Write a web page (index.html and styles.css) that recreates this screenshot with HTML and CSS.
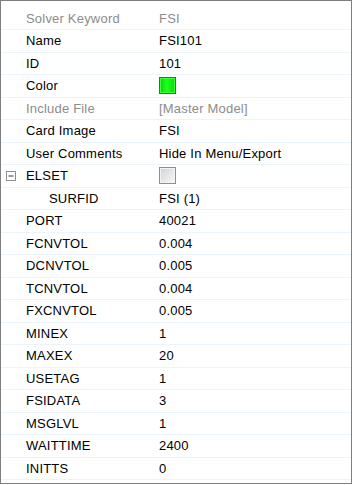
FILE: index.html
```html
<!DOCTYPE html>
<html>
<head>
<meta charset="utf-8">
<link rel="stylesheet" href="styles.css">
</head>
<body>
<div class="panel">
  <div class="row dis"><span class="lbl">Solver Keyword</span><span class="val">FSI</span></div>
  <div class="row"><span class="lbl">Name</span><span class="val">FSI101</span></div>
  <div class="row"><span class="lbl">ID</span><span class="val">101</span></div>
  <div class="row"><span class="lbl">Color</span><span class="val"><span class="swatch"></span></span></div>
  <div class="row dis"><span class="lbl">Include File</span><span class="val">[Master Model]</span></div>
  <div class="row"><span class="lbl">Card Image</span><span class="val">FSI</span></div>
  <div class="row"><span class="lbl">User Comments</span><span class="val">Hide In Menu/Export</span></div>
  <div class="row"><span class="lbl"><span class="tog"><svg width="10" height="10" viewBox="0 0 10 10"><rect x="0.5" y="0.5" width="9" height="9" fill="#fff" stroke="#8e8f8f"/><path d="M2.5 5h5" stroke="#3a3a3a"/></svg></span>ELSET</span><span class="val"><span class="check"></span></span></div>
  <div class="row"><span class="lbl sub">SURFID</span><span class="val">FSI (1)</span></div>
  <div class="row"><span class="lbl">PORT</span><span class="val">40021</span></div>
  <div class="row"><span class="lbl">FCNVTOL</span><span class="val">0.004</span></div>
  <div class="row"><span class="lbl">DCNVTOL</span><span class="val">0.005</span></div>
  <div class="row"><span class="lbl">TCNVTOL</span><span class="val">0.004</span></div>
  <div class="row"><span class="lbl">FXCNVTOL</span><span class="val">0.005</span></div>
  <div class="row"><span class="lbl">MINEX</span><span class="val">1</span></div>
  <div class="row"><span class="lbl">MAXEX</span><span class="val">20</span></div>
  <div class="row"><span class="lbl">USETAG</span><span class="val">1</span></div>
  <div class="row"><span class="lbl">FSIDATA</span><span class="val">3</span></div>
  <div class="row"><span class="lbl">MSGLVL</span><span class="val">1</span></div>
  <div class="row"><span class="lbl">WAITTIME</span><span class="val">2400</span></div>
  <div class="row"><span class="lbl">INITTS</span><span class="val">0</span></div>
</div>
</body>
</html>
```
FILE: styles.css
```css
html, body {
  margin: 0;
  padding: 0;
  background: #fff;
}
body {
  font-family: "Liberation Sans", Arial, sans-serif;
  font-size: 13px;
  letter-spacing: 0.2px;
  color: #000;
}
.panel {
  box-sizing: border-box;
  width: 352px;
  height: 484px;
  border: 1px solid #7f7f7f;
  padding-top: 6.5px;
  background: #fff;
  overflow: hidden;
}
.row {
  box-sizing: border-box;
  height: 22.5px;
  border-bottom: 1px solid #eaf4fa;
  display: flex;
  align-items: center;
}
.lbl {
  width: 133px;
  padding-left: 25px;
  display: flex;
  align-items: center;
  position: relative;
  white-space: nowrap;
}
.lbl.sub {
  padding-left: 48px;
  width: 110px;
}
.val {
  display: flex;
  align-items: center;
  white-space: nowrap;
}
.dis .lbl, .dis .val {
  color: #8c8c8c;
}
.tog {
  position: absolute;
  left: 5px;
  top: 50%;
  margin-top: -5px;
  width: 10px;
  height: 10px;
  display: block;
}
.tog svg {
  display: block;
}
.swatch {
  display: block;
  box-sizing: border-box;
  width: 17px;
  height: 17px;
  border: 1px solid #5a5a5a;
  background: linear-gradient(to right, #00d800 0%, #20ff20 45%, #00e000 100%);
  box-shadow: inset 0 0 0 1px #40ff40;
}
.check {
  display: block;
  box-sizing: border-box;
  width: 17px;
  height: 17px;
  border: 1px solid #8f8f8f;
  background: linear-gradient(135deg, #d2d2d2 0%, #e6e6e6 50%, #f7f7f7 100%);
  box-shadow: inset 0 0 0 1px #f4f4f4;
}
```
